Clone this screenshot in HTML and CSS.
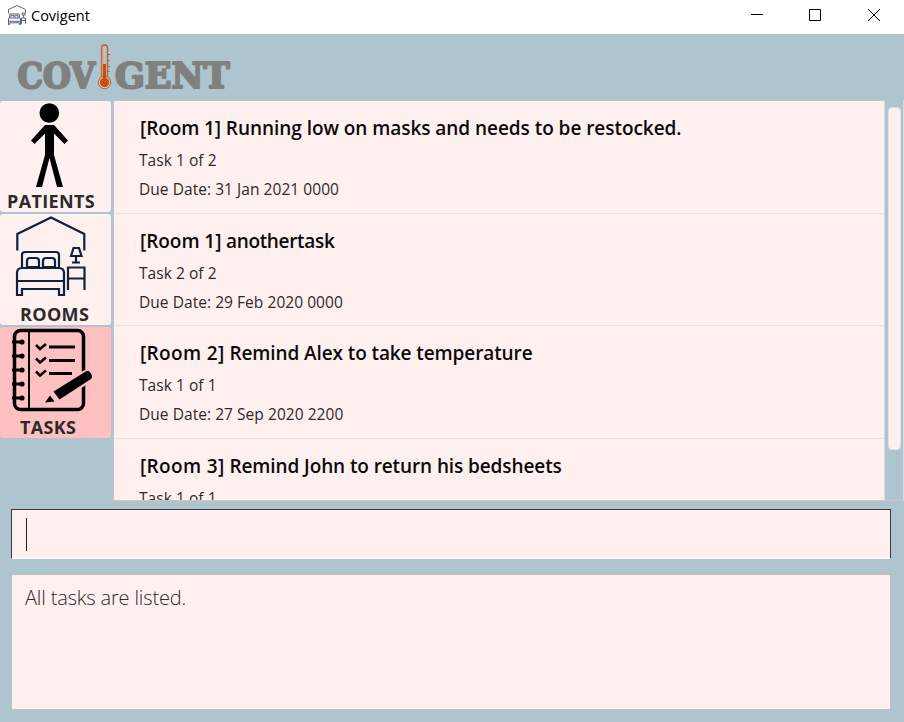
FILE: index.html
```html
<!DOCTYPE html>
<html lang="en">
<head>
<meta charset="utf-8">
<title>Covigent</title>
<link rel="stylesheet" href="styles.css">
</head>
<body>
<header class="titlebar">
  <svg class="app-icon" width="18" height="20" viewBox="0 0 72 80" fill="none" stroke="#5b6576" stroke-width="4"><path d="M2 34V18L36 2l34 16v16M7 52V36h38v16M12 50v-9h11v9m5 0v-9h11v9M2 78V56q0-4 4-4h40q4 0 4 4v22h-5v-7H7v7zM2 65h48M54 75V52h16v23M54 62h16M62 50V40m-6 0 2-8h8l3 8z"/></svg>
  <span class="app-name">Covigent</span>
  <div class="controls">
    <svg width="12" height="12" viewBox="0 0 12 12"><path d="M0 5.5h12"/></svg>
    <svg width="12" height="12" viewBox="0 0 12 12"><path d="M.5 .5h11v11H.5z"/></svg>
    <svg width="12" height="12" viewBox="0 0 12 12"><path d="M0 0l12 12M12 0L0 12"/></svg>
  </div>
</header>
<div class="brand">
  <svg width="250" height="66" viewBox="0 34 250 66">
    <g class="wordmark">
      <text x="17.500" y="87.500" textLength="77.500" lengthAdjust="spacingAndGlyphs">COV</text>
      <text x="115" y="87.500" textLength="114.500" lengthAdjust="spacingAndGlyphs">GENT</text>
    </g>
    <g fill="none" stroke="#c55a1b">
      <path d="M101.500 78V48q0-3 3-3t3 3v30" stroke-width="1.300"/>
      <path d="M102.500 76V48" stroke="#dc9670" stroke-width="1.500"/>
      <circle cx="104.500" cy="82.500" r="6.200" fill="#c9d0d3" stroke-width="1"/>
      <circle cx="104.500" cy="82.500" r="4.700" fill="#c55011" stroke="none"/>
      <path d="M104.500 80V64" stroke="#c55011" stroke-width="3"/>
      <path d="M107.500 54.500h2.500M107.500 60.500h2M107.500 66.500h2.500M107.500 71.500h2"/>
    </g>
  </svg>
</div>
<main class="content">
  <nav class="tabs">
    <a class="tab patients">
      <svg width="111" height="90" viewBox="0 101 111 90"><circle cx="49.300" cy="113" r="9.800"/><path d="M45 125h9l14 15.500-3.500 3.500L54 133.500V155l9 32h-6l-7.500-29-7.500 29h-6l9-32v-21.500L34.500 144l-3.500-3.500z"/></svg>
      <span>PATIENTS</span>
    </a>
    <a class="tab rooms">
      <svg width="111" height="90" viewBox="0 214 111 90" fill="none" stroke="#0c2340" stroke-width="2.200"><path d="M17.300 250.500V234L51 217.500 84.300 234v16.500M22 268v-13q0-3 3-3h31q3 0 3 3v13M27 267v-6q0-3 3-3h6q3 0 3 3v6zM43 267v-6q0-3 3-3h6q3 0 3 3v6zM17 295v-22q0-5 5-5h37q5 0 5 5v22h-5v-6H22v6zM17 281h47M68 290v-22.500h16.500V290M68 278.500h16.500M76 262.500V256M72 262.500h8M71 256l2.500-8h5.500l2.500 8z"/></svg>
      <span>ROOMS</span>
    </a>
    <a class="tab tasks active">
      <svg width="111" height="90" viewBox="0 327 111 90"><g fill="none" stroke="#000"><rect x="14.500" y="330.500" width="69" height="79" rx="6" stroke-width="3.500"/><path d="M29 330v80" stroke-width="2"/><path d="M12 342h11M12 356h11M12 370h11M12 384h11M12 398h11" stroke-width="3"/><path d="M36 345l4 4 6-5M36 358.500l4 4 6-5M36 371.500l4 4 6-5" stroke-width="2.500"/><path d="M49 347h26M49 360.500h26M49 373.500h23" stroke-width="3"/></g><g><circle cx="22" cy="342" r="2.600"/><circle cx="22" cy="356" r="2.600"/><circle cx="22" cy="370" r="2.600"/><circle cx="22" cy="384" r="2.600"/><circle cx="22" cy="398" r="2.600"/></g><path d="M79 373l8-4 4 12-8 6-21 14-13 2z" fill="#ffc0c2"/><path d="M53.500 391.500L86.500 371q2.500-1 4.500 2.500t0 5.500L59.500 399.500zM50 395.500l4.500 6-9.500 1z"/></svg>
      <span>TASKS</span>
    </a>
  </nav>
  <section class="list">
    <article class="task long"><h2><span class="room">[Room 1]</span> Running low on masks and needs to be restocked.</h2><p>Task 1 of 2</p><p>Due Date: 31 Jan 2021 0000</p></article>
    <article class="task short"><h2><span class="room">[Room 1]</span> anothertask</h2><p>Task 2 of 2</p><p>Due Date: 29 Feb 2020 0000</p></article>
    <article class="task wide"><h2><span class="room">[Room 2]</span> Remind Alex to take temperature</h2><p>Task 1 of 1</p><p>Due Date: 27 Sep 2020 2200</p></article>
    <article class="task wide"><h2><span class="room">[Room 3]</span> Remind John to return his bedsheets</h2><p>Task 1 of 1</p></article>
  </section>
  <div class="scrollbar"><div class="thumb"></div></div>
</main>
<div class="command"><span class="caret"></span></div>
<div class="result">All tasks are listed.</div>
</body>
</html>
```

FILE: styles.css
```css
* { box-sizing: border-box; }
body {
  margin: 0;
  width: 904px;
  height: 722px;
  overflow: hidden;
  display: flex;
  flex-direction: column;
  background: #aec5cf;
  color: #2c2a2b;
  font-family: "Open Sans", "Noto Sans", sans-serif;
}
.titlebar {
  height: 34px;
  flex: none;
  display: flex;
  align-items: center;
  padding: 0 24px 4px 8px;
  background: #fff;
}
.app-name { margin-left: 5px; font-size: 14.5px; letter-spacing: 0; color: #000; }
.controls { margin-left: auto; display: flex; gap: 46px; }
.controls svg { fill: none; stroke: #000; stroke-width: 1; }
.controls svg:last-child { margin-left: 1px; }
.brand { height: 66px; flex: none; }
.brand svg { display: block; }
.wordmark {
  font-family: "DejaVu Serif", serif;
  font-weight: bold;
  font-size: 34.5px;
  fill: #808080;
  stroke: #808080;
  stroke-width: 2.2;
  stroke-linejoin: round;
}
.content { display: flex; height: 401px; flex: none; }
.tabs { width: 113px; padding-top: 1px; display: flex; flex-direction: column; gap: 2px; }
.tab {
  width: 111px;
  height: 111px;
  display: flex;
  flex-direction: column;
  border-radius: 3px;
  background: #fff0f0;
}
.tab svg { display: block; flex: none; }
.tab span { font-size: 18px; line-height: 20px; font-weight: 700; letter-spacing: 0.35px; white-space: nowrap; }
.patients span { padding-left: 7px; }
.rooms span { padding-left: 20px; }
.tasks span { padding-left: 20px; }
.tab.active { background: #ffc0c2; }
.list {
  width: 772px;
  border: 1px solid #c8c4c7;
  border-right-color: #d5dce2;
  background: #fff0f0;
  overflow: hidden;
}
.task { height: 112.600px; padding: 12px 0 0 25px; border-bottom: 1px solid #e2e3e7; }
.task h2 { margin: 0 0 1px; padding-left: 1px; font-size: 19px; line-height: 30px; font-weight: 600; color: #0a0a0a; white-space: nowrap; }
.room { letter-spacing: -0.1px; }
.long h2 { letter-spacing: -0.05px; }
.short h2 { letter-spacing: -0.33px; }
.short .room { letter-spacing: -0.05px; }
.wide h2 { letter-spacing: -0.1px; }
.wide .room { letter-spacing: 0.35px; }
.task p { margin: 0; font-size: 15.5px; line-height: 29px; height: 29px; letter-spacing: 0.05px; padding-top: 2px; }
.scrollbar { width: 19px; padding: 7px 2px 0 3px; border-right: 1px solid #d5dce2; border-bottom: 1px solid #c8c4c7; }
.thumb { height: 343px; border-radius: 4px; background: #fff0f0; border: 1px solid #dde0e5; }
.command {
  margin: 8px 13px 0 11px;
  height: 50px;
  flex: none;
  padding: 8px 0 0 14px;
  background: #fff0f0;
  border: 1px solid #383838;
  border-bottom-color: #fff;
}
.caret { display: block; width: 1px; height: 33px; background: #222; }
.result {
  margin: 15px 13px 0 11px;
  height: 136px;
  flex: none;
  padding: 8px 13px;
  background: #fff0f0;
  border: 1px solid #c4bfc3;
  border-radius: 2px;
  font-size: 20px;
  line-height: 30px;
  font-weight: 300;
  letter-spacing: -0.15px;
}
```
